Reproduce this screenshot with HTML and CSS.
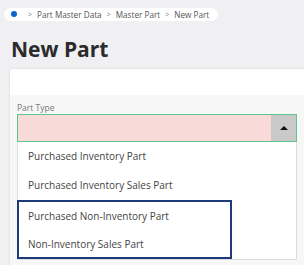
FILE: index.html
```html
<!DOCTYPE html>
<html lang="en">
<head>
  <meta charset="UTF-8" />
  <title>New Part</title>
  <link rel="stylesheet" href="styles.css">
</head>
<body>

  <nav class="crumbs">
    <span class="home-dot"></span>
    <span class="sep">&gt;</span>
    <span>Part Master Data</span>
    <span class="sep">&gt;</span>
    <span>Master Part</span>
    <span class="sep">&gt;</span>
    <span>New Part</span>
  </nav>

  <h1 class="page-title">New Part</h1>

  <div class="card">
    <div class="card-head"></div>
    <div class="card-body">
      <label class="field-label">Part Type</label>
      <div class="select">
        <div class="select-value"></div>
        <div class="select-btn"><span class="caret"></span></div>
      </div>
      <ul class="options">
        <li>Purchased Inventory Part</li>
        <li>Purchased Inventory Sales Part</li>
        <li class="hl-top">Purchased Non-Inventory Part</li>
        <li class="hl-bottom">Non-Inventory Sales Part</li>
      </ul>
    </div>
  </div>

</body>
</html>
```

FILE: styles.css
```css
body { margin: 0; background: #f0eff2; font-family: "Open Sans", sans-serif; color: #333; overflow: hidden; }

.crumbs { display: inline-flex; align-items: center; gap: 5px; margin: 7px 0 0 4px; height: 13px; padding: 0 9px 0 7px; background: #fff; border-radius: 7px; font-size: 8.2px; color: #555; }
.crumbs .home-dot { width: 6px; height: 6px; border-radius: 50%; background: #0b63ce; margin-right: 6px; }
.crumbs .sep { font-size: 7px; color: #777; }

.page-title { margin: 13px 0 0 11px; font-size: 21px; font-weight: 700; line-height: 28px; color: #2b2b2b; }

.card { margin: 6px -10px 0 10px; border-radius: 4px 0 0 0; box-shadow: 0 0 2px rgba(0,0,0,0.15); background: #f7f7f7; }
.card-head { height: 26px; background: #fff; border-radius: 4px 0 0 0; }
.card-body { padding: 7px 0 10px 7px; }
.field-label { display: block; font-size: 8.5px; color: #777; line-height: 11px; margin-bottom: 1px; }

.select { display: flex; width: 280px; height: 28px; border: 1px solid #5cc68c; box-sizing: border-box; }
.select-value { flex: 1; background: #f8dad8; }
.select-btn { width: 25px; background: #c9c9c9; display: flex; align-items: center; justify-content: center; }
.caret { width: 0; height: 0; border-left: 4px solid transparent; border-right: 4px solid transparent; border-bottom: 4px solid #111; }

.options { list-style: none; margin: 0; padding: 0; width: 280px; box-sizing: border-box; background: #fff; border: 1px solid #ddd; border-top: none; }
.options li { height: 29px; line-height: 29px; padding-left: 10px; font-size: 10px; color: #444; }
.options .hl-top, .options .hl-bottom { width: 215px; box-sizing: border-box; margin-left: -1px; border-left: 2px solid #1c3b78; border-right: 2px solid #1c3b78; padding-left: 9px; }
.options .hl-top { border-top: 2px solid #1c3b78; height: 30px; }
.options .hl-bottom { border-bottom: 2px solid #1c3b78; }
```
